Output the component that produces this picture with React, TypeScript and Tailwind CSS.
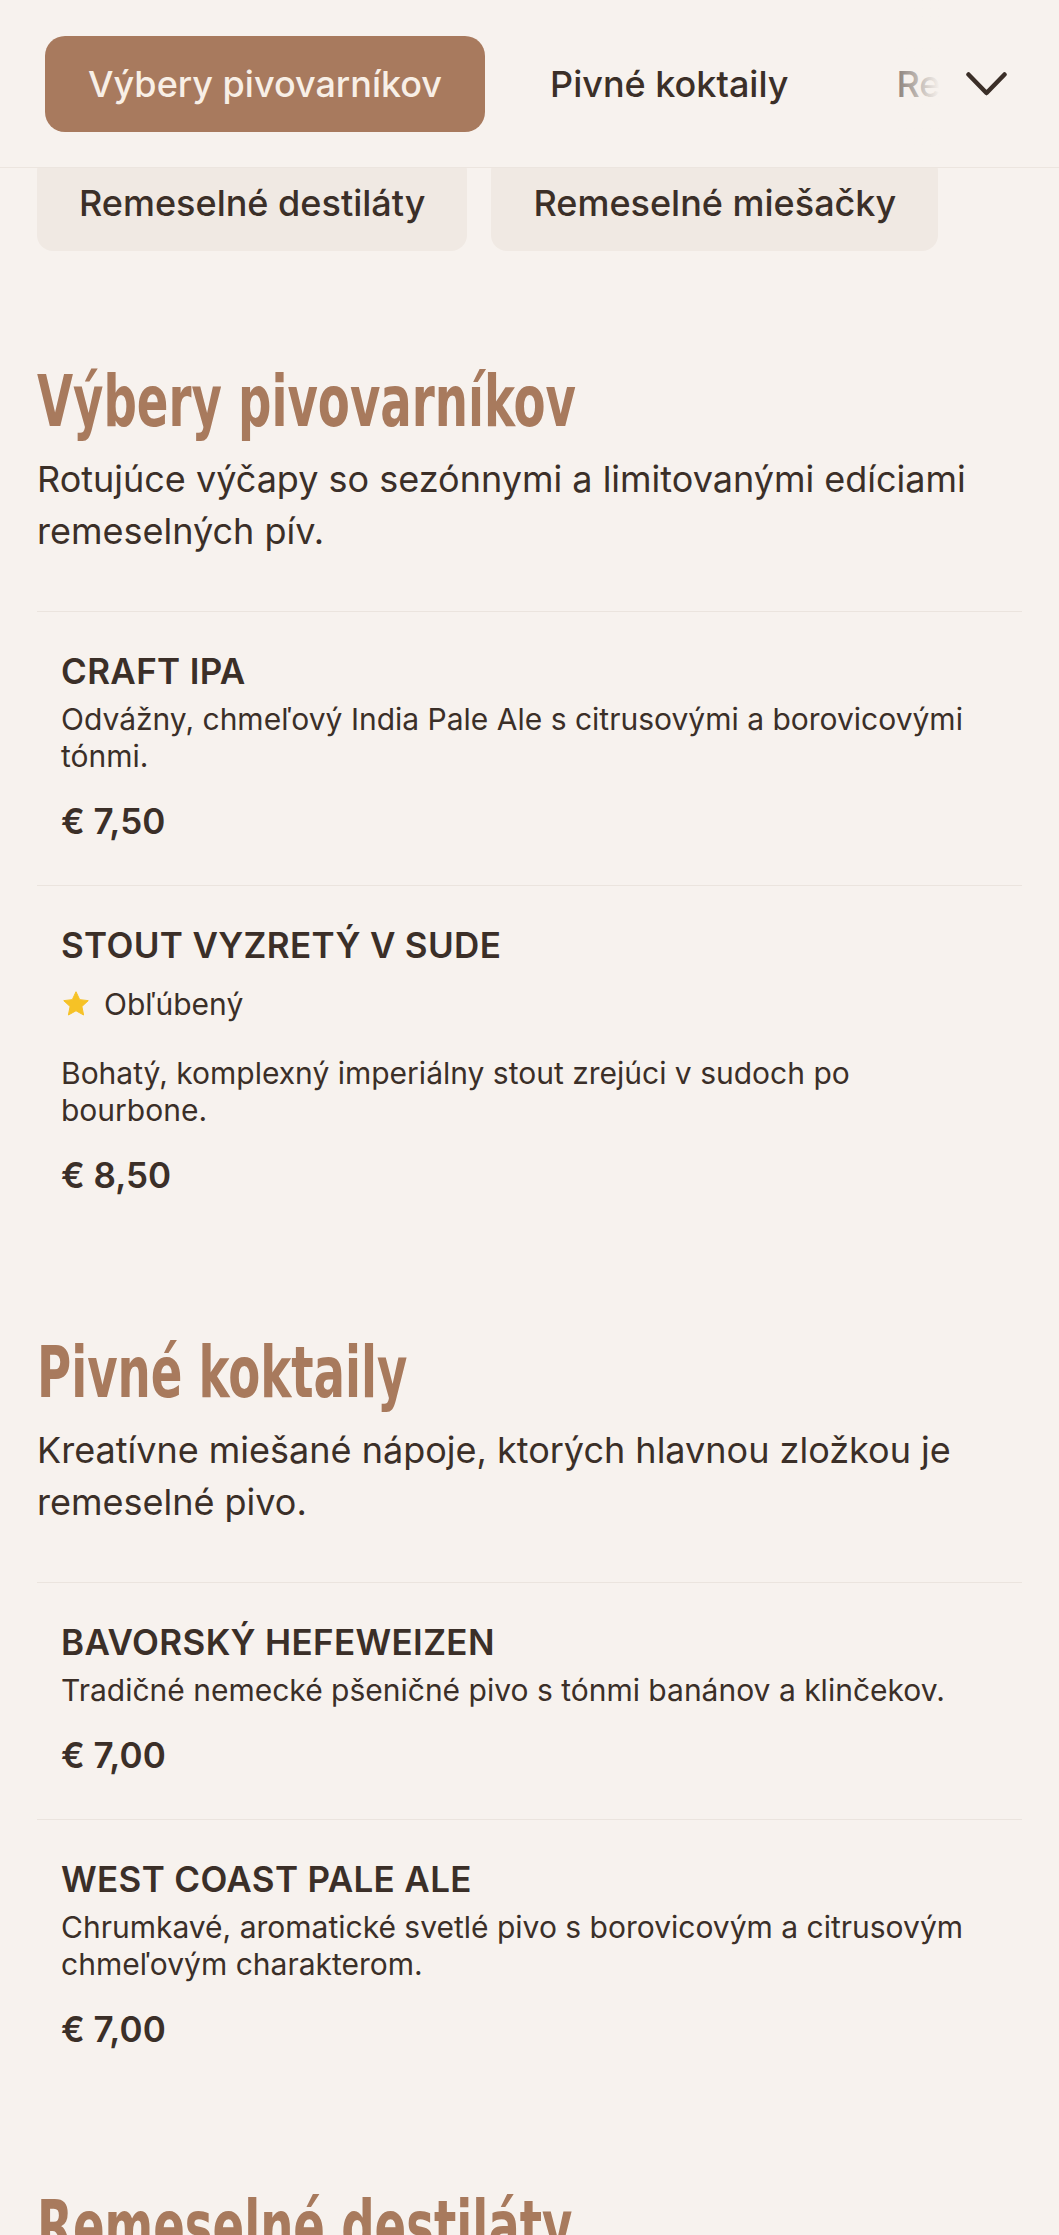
import React from "react";

type Item = {
  name: string;
  desc: string;
  price: string;
  popular?: boolean;
};

type Section = {
  title: string;
  desc: string;
  items: Item[];
};

const sections: Section[] = [
  {
    title: "Výbery pivovarníkov",
    desc: "Rotujúce výčapy so sezónnymi a limitovanými edíciami remeselných pív.",
    items: [
      {
        name: "CRAFT IPA",
        desc: "Odvážny, chmeľový India Pale Ale s citrusovými a borovicovými tónmi.",
        price: "€ 7,50",
      },
      {
        name: "STOUT VYZRETÝ V SUDE",
        desc: "Bohatý, komplexný imperiálny stout zrejúci v sudoch po bourbone.",
        price: "€ 8,50",
        popular: true,
      },
    ],
  },
  {
    title: "Pivné koktaily",
    desc: "Kreatívne miešané nápoje, ktorých hlavnou zložkou je remeselné pivo.",
    items: [
      {
        name: "BAVORSKÝ HEFEWEIZEN",
        desc: "Tradičné nemecké pšeničné pivo s tónmi banánov a klinčekov.",
        price: "€ 7,00",
      },
      {
        name: "WEST COAST PALE ALE",
        desc: "Chrumkavé, aromatické svetlé pivo s borovicovým a citrusovým chmeľovým charakterom.",
        price: "€ 7,00",
      },
    ],
  },
  {
    title: "Remeselné destiláty",
    desc: "Ručne vyrábané destiláty z malých lokálnych liehovarov.",
    items: [
      {
        name: "BOROVIČKA",
        desc: "Tradičný slovenský destilát z borievok.",
        price: "€ 4,50",
      },
    ],
  },
];

function Star() {
  return (
    <svg width="30" height="30" viewBox="0 0 24 24" aria-hidden="true">
      <path
        d="M12 2.2l2.95 6.3 6.85.8-5.08 4.7 1.36 6.8L12 17.4l-6.08 3.4 1.36-6.8L2.2 9.3l6.85-.8z"
        fill="#f6c226"
        stroke="#f6c226"
        strokeWidth="0.8"
        strokeLinejoin="round"
      />
    </svg>
  );
}

function Chevron() {
  return (
    <svg width="41" height="24" viewBox="0 0 41 24" aria-hidden="true">
      <polyline
        points="2.5,2.5 20.5,21 38.5,2.5"
        fill="none"
        stroke="#3b2f28"
        strokeWidth="4.5"
        strokeLinecap="round"
        strokeLinejoin="round"
      />
    </svg>
  );
}

function MenuItem({ item }: { item: Item }) {
  return (
    <div className="border-t border-[#ebe4de] px-[24px] pt-[37px] pb-[42px]">
      <h3 className="text-[35px] font-semibold leading-[44px] tracking-[0.01em] text-[#3b2f28]">
        {item.name}
      </h3>
      {item.popular && (
        <div className="mt-[19px] flex h-[36px] items-center gap-[13px]">
          <Star />
          <span className="text-[30px] leading-[36px] text-[#3b2f28]">Obľúbený</span>
        </div>
      )}
      <p
        className={
          (item.popular ? "mt-[33px]" : "mt-[8px]") + " text-[30px] leading-[37px] text-[#3b2f28]"
        }
      >
        {item.desc}
      </p>
      <div className="mt-[24px] text-[35px] font-semibold leading-[44px] text-[#3b2f28]">
        {item.price}
      </div>
    </div>
  );
}

export default function App() {
  const tabs = ["Výbery pivovarníkov", "Pivné koktaily", "Remeselné destiláty", "Remeselné miešačky"];
  return (
    <div className="h-screen overflow-hidden bg-[#f7f2ee] font-['Inter','Noto_Sans',sans-serif] text-[#3b2f28]">
      <header className="relative z-10 h-[168px] overflow-hidden border-b border-[#ece5df] bg-[#f7f2ee]">
        <div className="flex items-center gap-[22px] whitespace-nowrap pl-[45px] pt-[36px]">
          {tabs.map((t, i) => (
            <div
              key={t}
              className={
                i === 0
                  ? "flex h-[96px] shrink-0 items-center rounded-[20px] bg-[#a87a5e] px-[43px] text-[36px] font-medium text-[#f8efe6]"
                  : "flex h-[96px] shrink-0 items-center rounded-[20px] px-[43px] text-[36px] font-medium text-[#3b2f28]"
              }
            >
              {t}
            </div>
          ))}
        </div>
        <div className="absolute right-0 top-0 flex h-full">
          <div className="w-[75px] bg-linear-to-r from-[#f7f2ee]/0 to-[#f7f2ee]" />
          <div className="flex items-center bg-[#f7f2ee] pl-[26px] pr-[52px]">
            <Chevron />
          </div>
        </div>
      </header>

      <main className="px-[37px]">
        <div className="-mt-[13px] flex gap-[24px]">
          {["Remeselné destiláty", "Remeselné miešačky"].map((c) => (
            <div
              key={c}
              className="flex h-[96px] items-center rounded-[16px] bg-[#f0e9e3] px-[42px] text-[36px] font-medium text-[#3b2f28]"
            >
              {c}
            </div>
          ))}
        </div>

        {sections.map((s, si) => (
          <section key={s.title} className={si === 0 ? "mt-[108px]" : "mt-[91px]"}>
            <h2 className="origin-left scale-x-[0.73] whitespace-nowrap font-['DejaVu_Sans_Condensed','DejaVu_Sans',sans-serif] text-[71px] font-bold leading-[86px] text-[#a87a5d]">
              {s.title}
            </h2>
            <p className="mt-[8px] text-[36px] leading-[52px] text-[#3b2f28]">{s.desc}</p>
            <div className="mt-[54px]">
              {s.items.map((it) => (
                <MenuItem key={it.name} item={it} />
              ))}
            </div>
          </section>
        ))}
      </main>
    </div>
  );
}
